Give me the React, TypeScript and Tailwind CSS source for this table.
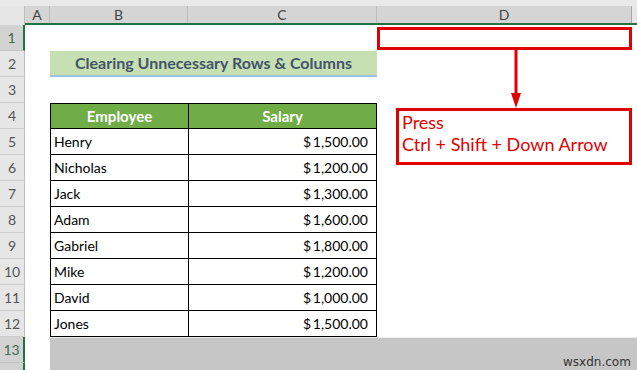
const people = [
  { name: "Henry", salary: "$\u20091,500.00" },
  { name: "Nicholas", salary: "$\u20091,200.00" },
  { name: "Jack", salary: "$\u20091,300.00" },
  { name: "Adam", salary: "$\u20091,600.00" },
  { name: "Gabriel", salary: "$\u20091,800.00" },
  { name: "Mike", salary: "$\u20091,200.00" },
  { name: "David", salary: "$\u20091,000.00" },
  { name: "Jones", salary: "$\u20091,500.00" },
];

function RowHead({ n, selected }: { n?: number; selected?: boolean }) {
  return (
    <div
      className={
        selected
          ? "w-[25px] shrink-0 flex items-center justify-center bg-[#d2d2d2] border-b border-b-[#c4c4c4] border-r-2 border-r-[#217346] text-[14px] text-[#3f6b50]"
          : "w-[25px] shrink-0 flex items-center justify-center bg-[#e6e6e6] border-b border-b-[#cfcfcf] border-r border-r-[#bdbdbd] text-[14px] text-[#555]"
      }
    >
      {n}
    </div>
  );
}

export default function App() {
  return (
    <div className="relative w-[637px] h-[370px] overflow-hidden bg-white font-['Lato',sans-serif]">
      {/* top strip */}
      <div className="h-[6px] bg-[#e9e9e9]" />

      {/* column headers */}
      <div className="flex h-[19px] text-[14px] text-[#444]">
        <div className="w-[25px] shrink-0 bg-[#e6e6e6] border-r border-[#bdbdbd]" />
        <div className="flex flex-1 border-b-2 border-[#217346] bg-[#d5d5d5]">
          <div className="w-[25px] shrink-0 flex items-center justify-center border-r border-[#bdbdbd]">A</div>
          <div className="w-[138px] shrink-0 flex items-center justify-center border-r border-[#bdbdbd]">B</div>
          <div className="w-[189px] shrink-0 flex items-center justify-center border-r border-[#bdbdbd]">C</div>
          <div className="w-[255px] shrink-0 flex items-center justify-center border-r border-[#a8a8a8]">D</div>
          <div className="flex-1 bg-[#e6e6e6]" />
        </div>
      </div>

      {/* row 1 */}
      <div className="flex h-[26px]">
        <RowHead n={1} selected />
        <div className="flex-1" />
      </div>

      {/* row 2: title */}
      <div className="flex h-[26px]">
        <RowHead n={2} />
        <div className="w-[25px] shrink-0" />
        <div className="w-[327px] shrink-0 flex items-center justify-center bg-[#c6e0b4] border-b-2 border-[#9bc2e6] text-[16px] font-bold text-[#44546a]">
          Clearing Unnecessary Rows &amp; Columns
        </div>
      </div>

      {/* row 3 */}
      <div className="flex h-[26px]">
        <RowHead n={3} />
      </div>

      {/* row 4: table header */}
      <div className="flex h-[26px]">
        <RowHead n={4} />
        <div className="w-[25px] shrink-0" />
        <div className="w-[138px] shrink-0 flex items-center justify-center bg-[#70ad47] border border-r-0 border-black text-[15px] font-bold text-white">
          Employee
        </div>
        <div className="w-[189px] shrink-0 flex items-center justify-center bg-[#70ad47] border border-black text-[15px] font-bold text-white">
          Salary
        </div>
      </div>

      {/* data rows */}
      {people.map((p, i) => (
        <div key={p.name} className="flex h-[26px]">
          <RowHead n={i + 5} />
          <div className="w-[25px] shrink-0" />
          <div className="w-[138px] shrink-0 flex items-center pl-[3px] border-l border-b border-black text-[14px] text-black">
            {p.name}
          </div>
          <div className="w-[189px] shrink-0 flex items-center justify-end pr-[8px] border-l border-r border-b border-black text-[14px] text-black">
            {p.salary}
          </div>
        </div>
      ))}

      {/* selected rows 13+ */}
      <div className="flex h-[26px]">
        <RowHead n={13} selected />
        <div className="w-[25px] shrink-0" />
        <div className="flex-1 bg-[#c6c6c6] border-t border-[#ececec]" />
      </div>
      <div className="flex h-[26px]">
        <RowHead selected />
        <div className="w-[25px] shrink-0" />
        <div className="flex-1 bg-[#c6c6c6]" />
      </div>

      {/* red selection box on D1 */}
      <div className="absolute left-[377px] top-[27px] w-[255px] h-[23px] border-[3px] border-[#e10000]" />

      {/* arrow */}
      <svg className="absolute left-[508px] top-[49px]" width="16" height="60" viewBox="0 0 16 60">
        <line x1="8" y1="0" x2="8" y2="46" stroke="#e10000" strokeWidth="3" />
        <polygon points="3,44 13,44 8,59" fill="#e10000" />
      </svg>

      {/* note box */}
      <div className="absolute left-[396px] top-[108px] w-[236px] h-[57px] border-[3px] border-[#e10000] bg-white pl-[3px] text-[18px] leading-[22px] text-[#e10000]">
        <div>Press</div>
        <div>Ctrl + Shift + Down Arrow</div>
      </div>

      {/* watermark */}
      <div className="absolute left-[563px] top-[353px] text-[12px] text-[#333] font-['DejaVu_Sans',sans-serif]">
        wsxdn.com
      </div>
    </div>
  );
}
